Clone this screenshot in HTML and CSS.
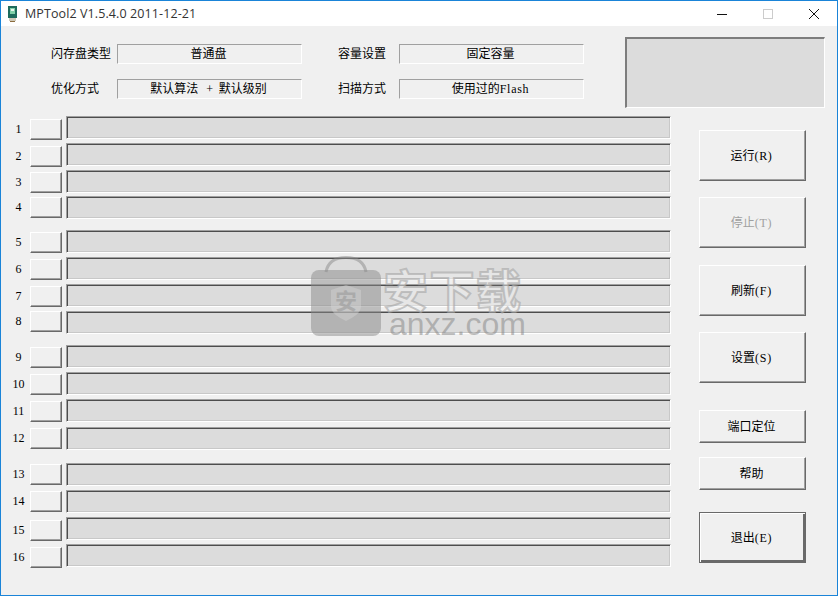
FILE: index.html
```html
<!DOCTYPE html>
<html lang="zh">
<head>
<meta charset="utf-8">
<title>MPTool2</title>
<link rel="stylesheet" href="styles.css">
</head>
<body>
<div class="window">
  <header class="titlebar">
    <svg class="app-icon" viewBox="0 0 9 16" width="9" height="16"><rect width="9" height="12" fill="#1d6b5c"/><rect x="2" y="2" width="5" height="6" fill="#7fd0a8"/><rect x="3" y="3" width="3" height="2" fill="#e8f5ee"/><rect x="1" y="12" width="7" height="3" fill="#cfc9b8"/><rect x="2" y="15" width="5" height="1" fill="#8c6d3f"/></svg>
    <span class="app-title">MPTool2 V1.5.4.0 2011-12-21</span>
    <div class="controls">
      <div class="control"><svg viewBox="0 0 10 10" width="10" height="10"><path d="M0 5.500H10" stroke="#111" fill="none"/></svg></div>
      <div class="control"><svg viewBox="0 0 10 10" width="10" height="10"><rect x=".5" y=".5" width="9" height="9" stroke="#ccc" fill="none"/></svg></div>
      <div class="control"><svg viewBox="0 0 10 10" width="10" height="10"><path d="M0 0L10 10M10 0L0 10" stroke="#111" fill="none"/></svg></div>
    </div>
  </header>
  <div class="panel">
    <section class="head">
      <div class="fields">
        <span class="f-label">闪存盘类型</span><div class="field">普通盘</div>
        <span class="f-label second">容量设置</span><div class="field raised">固定容量</div>
        <span class="f-label">优化方式</span><div class="field">默认算法<span class="ltn plus">+</span>默认级别</div>
        <span class="f-label second">扫描方式</span><div class="field raised">使用过的<span class="ltn">Flash</span></div>
      </div>
      <div class="bigbox"></div>
    </section>
    <section class="main">
      <div class="rows">
        <div class="group">
          <div class="row"><div class="port off3"><span class="num">1</span><div class="mini"></div></div><div class="bar"></div></div>
          <div class="row"><div class="port off3"><span class="num">2</span><div class="mini"></div></div><div class="bar"></div></div>
          <div class="row"><div class="port off2"><span class="num">3</span><div class="mini"></div></div><div class="bar"></div></div>
          <div class="row tight"><div class="port off1"><span class="num">4</span><div class="mini"></div></div><div class="bar"></div></div>
        </div>
        <div class="group">
          <div class="row"><div class="port off2"><span class="num">5</span><div class="mini"></div></div><div class="bar"></div></div>
          <div class="row"><div class="port off2"><span class="num">6</span><div class="mini"></div></div><div class="bar"></div></div>
          <div class="row"><div class="port off2"><span class="num">7</span><div class="mini"></div></div><div class="bar"></div></div>
          <div class="row"><div class="port off0"><span class="num">8</span><div class="mini"></div></div><div class="bar"></div></div>
        </div>
        <div class="group">
          <div class="row"><div class="port off2"><span class="num">9</span><div class="mini"></div></div><div class="bar"></div></div>
          <div class="row"><div class="port off2"><span class="num">10</span><div class="mini"></div></div><div class="bar"></div></div>
          <div class="row"><div class="port off2"><span class="num">11</span><div class="mini"></div></div><div class="bar"></div></div>
          <div class="row loose"><div class="port off1"><span class="num">12</span><div class="mini"></div></div><div class="bar"></div></div>
        </div>
        <div class="group last">
          <div class="row"><div class="port off1"><span class="num">13</span><div class="mini"></div></div><div class="bar"></div></div>
          <div class="row"><div class="port off1"><span class="num">14</span><div class="mini"></div></div><div class="bar"></div></div>
          <div class="row"><div class="port off3"><span class="num">15</span><div class="mini"></div></div><div class="bar"></div></div>
          <div class="row"><div class="port off3"><span class="num">16</span><div class="mini"></div></div><div class="bar"></div></div>
        </div>
      </div>
      <div class="actions">
        <button class="action tall">运行<span class="ltn">(R)</span></button>
        <button class="action tall g16 disabled">停止<span class="ltn">(T)</span></button>
        <button class="action tall g17">刷新<span class="ltn">(F)</span></button>
        <button class="action tall g16">设置<span class="ltn">(S)</span></button>
        <button class="action short g27">端口定位</button>
        <button class="action short g14">帮助</button>
        <button class="action tall g22 default">退出<span class="ltn">(E)</span></button>
      </div>
    </section>
  </div>
  <div class="watermark">
    <svg class="wm-icon" viewBox="0 0 70 80" width="70" height="80">
      <path d="M15 16C17 5 26 1.500 35 1.500S53 5 55 16" fill="none" stroke="#8a8a8a" stroke-opacity=".5" stroke-width="3"/>
      <rect x="0" y="14" width="70" height="66" rx="8" fill="#8a8a8a" fill-opacity=".5"/>
      <path d="M20 34L35 29L50 34V50C50 57 43 61 35 65C27 61 20 57 20 50Z" fill="#d4d4d4" fill-opacity=".45"/>
      <text x="35" y="53" class="wm-glyph">安</text>
    </svg>
    <div class="wm-text">
      <div class="wm-cn">安下载</div>
      <div class="wm-en">anxz.com</div>
    </div>
  </div>
</div>
</body>
</html>
```

FILE: styles.css
```css
* { box-sizing: border-box; }
html, body { margin: 0; padding: 0; }
body { width: 838px; height: 596px; overflow: hidden; font-family: "Noto Sans CJK SC", "Liberation Sans", sans-serif; font-size: 12px; color: #000; }
.window { position: relative; width: 838px; height: 596px; border: 1px solid #1a84d8; background: #f0f0f0; display: flex; flex-direction: column; }

.titlebar { height: 25px; background: #fff; display: flex; align-items: center; padding-left: 7px; flex: none; }
.app-icon { display: block; margin-right: 8px; }
.app-title { font-family: "Open Sans", "Liberation Sans", sans-serif; font-size: 12.500px; letter-spacing: .1px; color: #333; }
.controls { margin-left: auto; display: flex; }
.control { width: 46px; height: 25px; display: flex; align-items: center; justify-content: center; }

.panel { flex: 1; display: flex; flex-direction: column; }
.head { height: 90px; padding: 11px 0 0 50px; display: flex; flex: none; }
.fields { display: grid; grid-template-columns: 66px 185px 97px 185px; grid-template-rows: 20px 20px; row-gap: 15px; margin-top: 7px; align-items: center; }
.f-label { line-height: 18px; height: 20px; white-space: nowrap; }
.f-label.second { padding-left: 36px; }
.field { height: 20px; line-height: 16px; padding-right: 2px; text-align: center; border-top: 1px solid #a0a0a0; border-left: 1px solid #a0a0a0; border-bottom: 1px solid #fff; border-right: 1px solid #fff; white-space: pre; }
.field.raised { margin-top: -1px; }
.bigbox { width: 200px; height: 71px; margin-left: 41px; background: #dcdcdc; border-top: 2px solid #7d7d7d; border-left: 2px solid #7d7d7d; border-right: 1px solid #fff; border-bottom: 1px solid #fff; }
.ltn { font-family: "Liberation Serif", serif; font-size: 12px; letter-spacing: .7px; }
.plus { margin: 0 5px 0 8px; }

.main { display: flex; padding-left: 6px; }
.rows { width: 664px; flex: none; }
.group { display: flex; flex-direction: column; gap: 4px; margin-bottom: 11px; }
.group:nth-child(3) { margin-bottom: 13px; }
.group.last { margin-bottom: 0; }
.row { display: flex; height: 23px; }
.row.tight { margin-top: -1px; }
.row.loose { margin-top: 1px; }
.port { display: flex; width: 59px; height: 21px; align-items: center; flex: none; }
.off0 { margin-top: 0; }
.off1 { margin-top: 1px; }
.off2 { margin-top: 2px; }
.off3 { margin-top: 3px; }
.num { width: 23px; text-align: center; font-family: "Liberation Serif", serif; font-size: 12px; }
.mini { width: 32px; height: 21px; background: #f0f0f0; border-top: 1px solid #fff; border-left: 1px solid #fff; border-right: 1px solid #696969; border-bottom: 1px solid #696969; box-shadow: inset -1px -1px 0 #a0a0a0; }
.bar { width: 605px; height: 23px; background: #dcdcdc; border-top: 1px solid #a0a0a0; border-left: 1px solid #a0a0a0; border-right: 1px solid #fff; border-bottom: 1px solid #fff; box-shadow: inset 1px 1px 0 #4d4d4d, inset -1px -1px 0 #c8c8c8; }

.actions { display: flex; flex-direction: column; margin: 14px 0 0 28px; width: 107px; }
.action { display: block; width: 107px; padding: 0 2px 2px 0; font: inherit; color: #000; background: #f0f0f0; border-top: 1px solid #fff; border-left: 1px solid #fff; border-right: 1px solid #696969; border-bottom: 1px solid #696969; box-shadow: inset -1px -1px 0 #a0a0a0; }
.tall { height: 51px; }
.short { height: 33px; }
.g14 { margin-top: 14px; }
.g16 { margin-top: 16px; }
.g17 { margin-top: 17px; }
.g22 { margin-top: 22px; }
.g27 { margin-top: 27px; }
.action.disabled { color: #a0a0a0; }
.action.default { border: 1px solid #696969; box-shadow: inset 1px 1px 0 #fff, inset -2px -2px 0 #696969; }

.watermark { position: absolute; left: 310px; top: 255px; display: flex; gap: 2px; pointer-events: none; }
.wm-icon { display: block; }
.wm-glyph { font-size: 22px; font-weight: 700; text-anchor: middle; fill: #9a9a9a; fill-opacity: .6; }
.wm-text { width: 148px; }
.wm-cn { margin-top: 12px; height: 42px; line-height: 42px; font-size: 45px; letter-spacing: 1.500px; font-weight: 700; white-space: nowrap; color: rgba(240,240,240,.5); -webkit-text-stroke: 2px rgba(165,165,165,.6); }
.wm-en { margin: 1px 0 0 6px; height: 26px; line-height: 26px; font-family: "Liberation Sans", sans-serif; font-size: 32px; white-space: nowrap; color: rgba(130,130,130,.5); }
```
